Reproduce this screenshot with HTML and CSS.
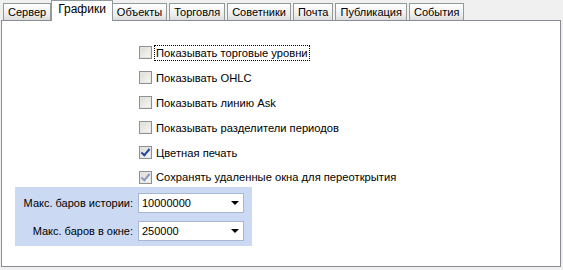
FILE: index.html
```html
<!DOCTYPE html>
<html>
<head>
  <title>Настройки — Графики</title>
  <link rel="stylesheet" href="styles.css">
</head>
<body>
  <div class="tabs">
    <div class="tab">Сервер</div>
    <div class="tab active">Графики</div>
    <div class="tab">Объекты</div>
    <div class="tab">Торговля</div>
    <div class="tab">Советники</div>
    <div class="tab">Почта</div>
    <div class="tab">Публикация</div>
    <div class="tab">События</div>
  </div>

  <div class="panel">
    <div class="checks">
      <label class="check"><span class="box"></span><span class="text focus">Показывать торговые уровни</span></label>
      <label class="check"><span class="box"></span><span class="text">Показывать OHLC</span></label>
      <label class="check"><span class="box"></span><span class="text">Показывать линию Ask</span></label>
      <label class="check"><span class="box"></span><span class="text">Показывать разделители периодов</span></label>
      <label class="check"><span class="box checked"></span><span class="text">Цветная печать</span></label>
      <label class="check"><span class="box checked dim"></span><span class="text">Сохранять удаленные окна для переоткрытия</span></label>
    </div>

    <div class="limits">
      <div class="field">
        <span class="field-label">Макс. баров истории:</span>
        <div class="combo"><span>10000000</span><span class="arrow"></span></div>
      </div>
      <div class="field">
        <span class="field-label">Макс. баров в окне:</span>
        <div class="combo"><span>250000</span><span class="arrow"></span></div>
      </div>
    </div>
  </div>
</body>
</html>
```

FILE: styles.css
```css
body { margin: 0; background: #f0f0f0; font-family: "Liberation Sans", Arial, sans-serif; font-size: 11px; color: #000; }

.tabs { display: flex; align-items: flex-end; height: 20px; padding-left: 3px; position: relative; z-index: 1; }
.tab { height: 16px; line-height: 16px; padding: 0 4px; margin-right: 2px; border: 1px solid #919b9c; border-bottom: none; background: linear-gradient(#ffffff, #ececec 70%, #dcdcdc); white-space: nowrap; }
.tab.active { height: 20px; line-height: 17px; padding: 0 6px; margin: 0 0 -1px -2px; background: #fff; font-size: 12px; }
.tab.active + .tab { margin-left: -1px; }

.panel { margin-left: 1px; width: 558px; height: 245px; border: 1px solid #898c95; background: #fff; }

.checks { display: flex; flex-direction: column; padding: 19px 0 0 137px; font-size: 11.2px; }
.check { display: flex; align-items: center; height: 25px; white-space: nowrap; }
.check:last-child { height: 24px; }
.box { width: 11px; height: 11px; border: 1px solid #8f9091; background: linear-gradient(135deg, #dcdcd6, #f7f7f5); margin-right: 3px; position: relative; box-shadow: inset 0 0 0 1px #e6e6e2; }
.box.checked::after { content: ""; position: absolute; left: 3px; top: 0px; width: 3px; height: 7px; border: solid #21449c; border-width: 0 2px 2px 0; transform: rotate(40deg); }
.box.dim::after { border-color: #8d99b8; }
.text { padding: 0 1px; line-height: 14px; }
.text.focus { outline: 1px dotted #000; }

.limits { margin: -2px 0 0 13px; width: 229px; padding: 6px 8px 5px 0; background: #ccd9f2; display: flex; flex-direction: column; gap: 8px; }
.field { display: flex; align-items: center; justify-content: flex-end; gap: 5px; white-space: nowrap; }
.combo { width: 101px; height: 18px; border: 1px solid #a7b6d2; background: #fff; display: flex; align-items: center; justify-content: space-between; padding: 0 0 0 3px; }
.arrow { width: 0; height: 0; border-left: 4px solid transparent; border-right: 4px solid transparent; border-top: 4px solid #000; margin-right: 4px; }
```
